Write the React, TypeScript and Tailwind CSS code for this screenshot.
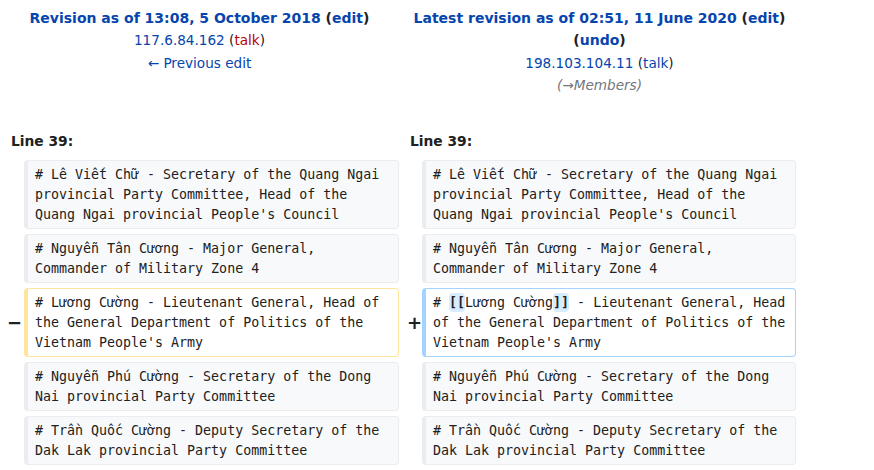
import React from "react";

const link = "text-[#0645ad]";

type Kind = "ctx" | "del" | "add";

function Box({ kind, children }: { kind: Kind; children: React.ReactNode }) {
  const cls =
    kind === "ctx"
      ? "bg-[#f8f9fa] border-[#eaecf0]"
      : kind === "del"
      ? "bg-white border-[#ffe49c]"
      : "bg-white border-[#a3d3ff]";
  return (
    <div
      className={`${cls} border border-l-4 rounded-[4px] pl-[7px] pr-[6px] pt-[4px] pb-[3px] font-['DejaVu_Sans_Mono',monospace] text-[13.3px] leading-[20px] text-[#202122] whitespace-pre-wrap`}
    >
      {children}
    </div>
  );
}

function Marker({ ch, pr }: { ch: string; pr: string }) {
  return (
    <div className={`flex items-center justify-end ${pr} font-bold text-[18px] text-[#202122] font-['DejaVu_Sans',sans-serif]`}>
      {ch}
    </div>
  );
}

const Hl = ({ children }: { children: React.ReactNode }) => (
  <span className="bg-[#d8ecff] font-bold rounded-[4px] py-[2px]">{children}</span>
);

export default function App() {
  const rows: { l: React.ReactNode; r: React.ReactNode; kind: "ctx" | "chg" }[] = [
    {
      kind: "ctx",
      l: "# Lê Viết Chữ - Secretary of the Quang Ngai\nprovincial Party Committee, Head of the\nQuang Ngai provincial People's Council",
      r: "# Lê Viết Chữ - Secretary of the Quang Ngai\nprovincial Party Committee, Head of the\nQuang Ngai provincial People's Council",
    },
    {
      kind: "ctx",
      l: "# Nguyễn Tân Cương - Major General,\nCommander of Military Zone 4",
      r: "# Nguyễn Tân Cương - Major General,\nCommander of Military Zone 4",
    },
    {
      kind: "chg",
      l: "# Lương Cường - Lieutenant General, Head of\nthe General Department of Politics of the\nVietnam People's Army",
      r: (
        <>
          {"# "}
          <Hl>[[</Hl>
          {"Lương Cường"}
          <Hl>]]</Hl>
          {" - Lieutenant General, Head\nof the General Department of Politics of the\nVietnam People's Army"}
        </>
      ),
    },
    {
      kind: "ctx",
      l: "# Nguyễn Phú Cường - Secretary of the Dong\nNai provincial Party Committee",
      r: "# Nguyễn Phú Cường - Secretary of the Dong\nNai provincial Party Committee",
    },
    {
      kind: "ctx",
      l: "# Trần Quốc Cường - Deputy Secretary of the\nDak Lak provincial Party Committee",
      r: "# Trần Quốc Cường - Deputy Secretary of the\nDak Lak provincial Party Committee",
    },
  ];

  return (
    <div className="w-[874px] h-[470px] bg-white overflow-hidden font-['DejaVu_Sans',sans-serif] text-[#202122] pt-[7px]">
      <div className="grid grid-cols-[399px_401px] text-center text-[13.6px] leading-[22.4px]">
        <div>
          <div className="font-bold text-[14px]">
            <span className={link}>Revision as of 13:08, 5 October 2018</span> (
            <span className={link}>edit</span>)
          </div>
          <div>
            <span className={link}>117.6.84.162</span> (<span className="text-[#ba0000]">talk</span>)
          </div>
          <div className={link}>← Previous edit</div>
        </div>
        <div>
          <div className="font-bold text-[14px]">
            <span className={link}>Latest revision as of 02:51, 11 June 2020</span> (
            <span className={link}>edit</span>)
          </div>
          <div className="font-bold text-[14px]">
            (<span className={link}>undo</span>)
          </div>
          <div>
            <span className={link}>198.103.104.11</span> (<span className={link}>talk</span>)
          </div>
          <div className="italic text-[#72777d]">(→Members)</div>
        </div>
      </div>

      <div className="grid grid-cols-[399px_397px] mt-[34px] text-[13.8px] leading-[20px] font-bold">
        <div className="pl-[11px]">Line 39:</div>
        <div className="pl-[11px]">Line 39:</div>
      </div>

      <div className="mt-[9px] flex flex-col gap-[5px]">
        {rows.map((row, i) => (
          <div key={i} className="grid grid-cols-[24px_375px_23px_374px]">
            {row.kind === "chg" ? <Marker ch="−" pr="pr-[2px]" /> : <div />}
            <Box kind={row.kind === "chg" ? "del" : "ctx"}>{row.l}</Box>
            {row.kind === "chg" ? <Marker ch="+" pr="pr-0" /> : <div />}
            <Box kind={row.kind === "chg" ? "add" : "ctx"}>{row.r}</Box>
          </div>
        ))}
      </div>
    </div>
  );
}
